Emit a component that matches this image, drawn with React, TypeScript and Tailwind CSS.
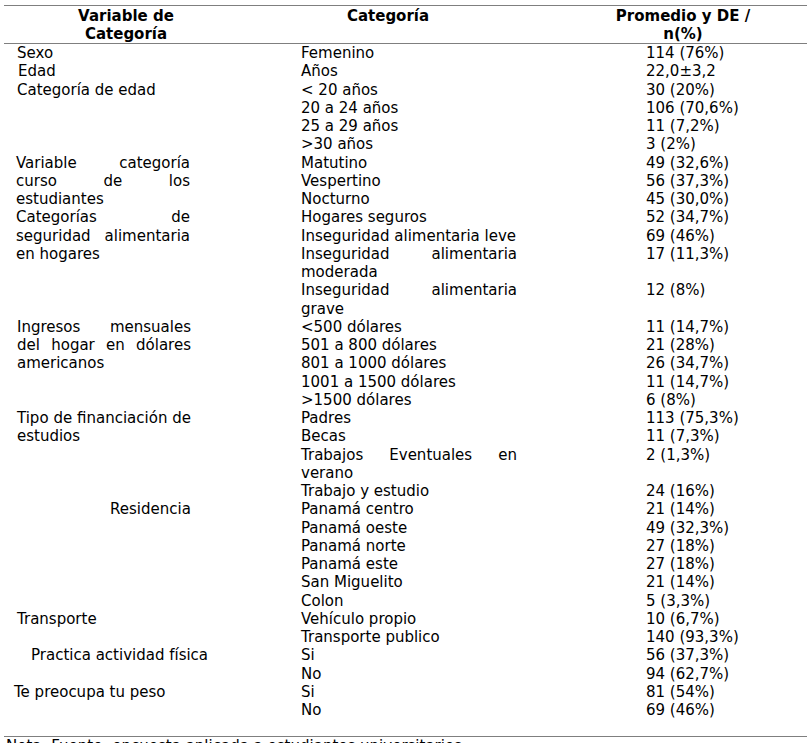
import React from "react";

type Item = { c: string[]; v: string };
type Group = { label: string[]; justify?: boolean; pl: number; items: Item[] };

const groups: Group[] = [
  { label: ["Sexo"], pl: 13, items: [{ c: ["Femenino"], v: "114 (76%)" }] },
  { label: ["Edad"], pl: 14, items: [{ c: ["Años"], v: "22,0±3,2" }] },
  {
    label: ["Categoría de edad"],
    pl: 13,
    items: [
      { c: ["< 20 años"], v: "30 (20%)" },
      { c: ["20 a 24 años"], v: "106 (70,6%)" },
      { c: ["25 a 29 años"], v: "11 (7,2%)" },
      { c: [">30 años"], v: "3 (2%)" },
    ],
  },
  {
    label: ["Variable categoría", "curso de los", "estudiantes"],
    justify: true,
    pl: 12,
    items: [
      { c: ["Matutino"], v: "49 (32,6%)" },
      { c: ["Vespertino"], v: "56 (37,3%)" },
      { c: ["Nocturno"], v: "45 (30,0%)" },
    ],
  },
  {
    label: ["Categorías de", "seguridad alimentaria", "en hogares"],
    justify: true,
    pl: 12,
    items: [
      { c: ["Hogares seguros"], v: "52 (34,7%)" },
      { c: ["Inseguridad alimentaria leve"], v: "69 (46%)" },
      { c: ["Inseguridad alimentaria", "moderada"], v: "17 (11,3%)" },
      { c: ["Inseguridad alimentaria", "grave"], v: "12 (8%)" },
    ],
  },
  {
    label: ["Ingresos mensuales", "del hogar en dólares", "americanos"],
    justify: true,
    pl: 13,
    items: [
      { c: ["<500 dólares"], v: "11 (14,7%)" },
      { c: ["501 a 800 dólares"], v: "21 (28%)" },
      { c: ["801 a 1000 dólares"], v: "26 (34,7%)" },
      { c: ["1001 a 1500 dólares"], v: "11 (14,7%)" },
      { c: [">1500 dólares"], v: "6 (8%)" },
    ],
  },
  {
    label: ["Tipo de financiación de", "estudios"],
    justify: true,
    pl: 13,
    items: [
      { c: ["Padres"], v: "113 (75,3%)" },
      { c: ["Becas"], v: "11 (7,3%)" },
      { c: ["Trabajos Eventuales en", "verano"], v: "2 (1,3%)" },
      { c: ["Trabajo y estudio"], v: "24 (16%)" },
    ],
  },
  {
    label: ["Residencia"],
    pl: 106,
    items: [
      { c: ["Panamá centro"], v: "21 (14%)" },
      { c: ["Panamá oeste"], v: "49 (32,3%)" },
      { c: ["Panamá norte"], v: "27 (18%)" },
      { c: ["Panamá este"], v: "27 (18%)" },
      { c: ["San Miguelito"], v: "21 (14%)" },
      { c: ["Colon"], v: "5 (3,3%)" },
    ],
  },
  {
    label: ["Transporte"],
    pl: 13,
    items: [
      { c: ["Vehículo propio"], v: "10 (6,7%)" },
      { c: ["Transporte publico"], v: "140 (93,3%)" },
    ],
  },
  {
    label: ["Practica actividad física"],
    pl: 27,
    items: [
      { c: ["Si"], v: "56 (37,3%)" },
      { c: ["No"], v: "94 (62,7%)" },
    ],
  },
  {
    label: ["Te preocupa tu peso"],
    pl: 10,
    items: [
      { c: ["Si"], v: "81 (54%)" },
      { c: ["No"], v: "69 (46%)" },
    ],
  },
];

function Lines({ lines, justify }: { lines: string[]; justify?: boolean }) {
  return (
    <>
      {lines.map((l, i) => {
        const j = justify && i < lines.length - 1;
        return (
          <div
            key={i}
            className={
              j
                ? "whitespace-nowrap text-justify [text-align-last:justify]"
                : "whitespace-nowrap"
            }
          >
            {l}
          </div>
        );
      })}
    </>
  );
}

export default function App() {
  return (
    <div className="w-[811px] h-[743px] overflow-hidden bg-white text-black font-['DejaVu_Sans','Verdana',sans-serif] text-[15px]">
      <div className="mx-[4px] mt-[5px] border-t-[1.5px] border-[#7f7f7f] border-b-[1.5px] border-b-[#7f7f7f] flex font-bold leading-[17.5px] pt-[2px]">
        <div className="w-[244px] text-center">
          Variable de
          <br />
          Categoría
        </div>
        <div className="w-[280px] text-center">Categoría</div>
        <div className="flex-1 text-center pl-[31px]">
          Promedio y DE /
          <br />
          n(%)
        </div>
      </div>
      <div className="mx-[4px] leading-[18.25px]">
        {groups.map((g, gi) => (
          <div key={gi} className="flex">
            <div className="w-[297px] shrink-0">
              <div style={{ paddingLeft: g.pl }}>
                <div className={g.justify ? "w-[174px]" : ""}>
                  <Lines lines={g.label} justify={g.justify} />
                </div>
              </div>
            </div>
            <div className="flex-1 flex flex-col">
              {g.items.map((it, ii) => (
                <div key={ii} className="flex">
                  <div className="w-[345px] shrink-0">
                    <div className="w-[216px]">
                      <Lines lines={it.c} justify={it.c.length > 1} />
                    </div>
                  </div>
                  <div className="whitespace-nowrap">{it.v}</div>
                </div>
              ))}
            </div>
          </div>
        ))}
      </div>
      <div className="mx-[4px] mt-[17px] border-t-[1.5px] border-[#7f7f7f] pt-[0px] pl-[2px] leading-[18px] whitespace-nowrap">
        Nota: Fuente: encuesta aplicada a estudiantes universitarios
      </div>
    </div>
  );
}
